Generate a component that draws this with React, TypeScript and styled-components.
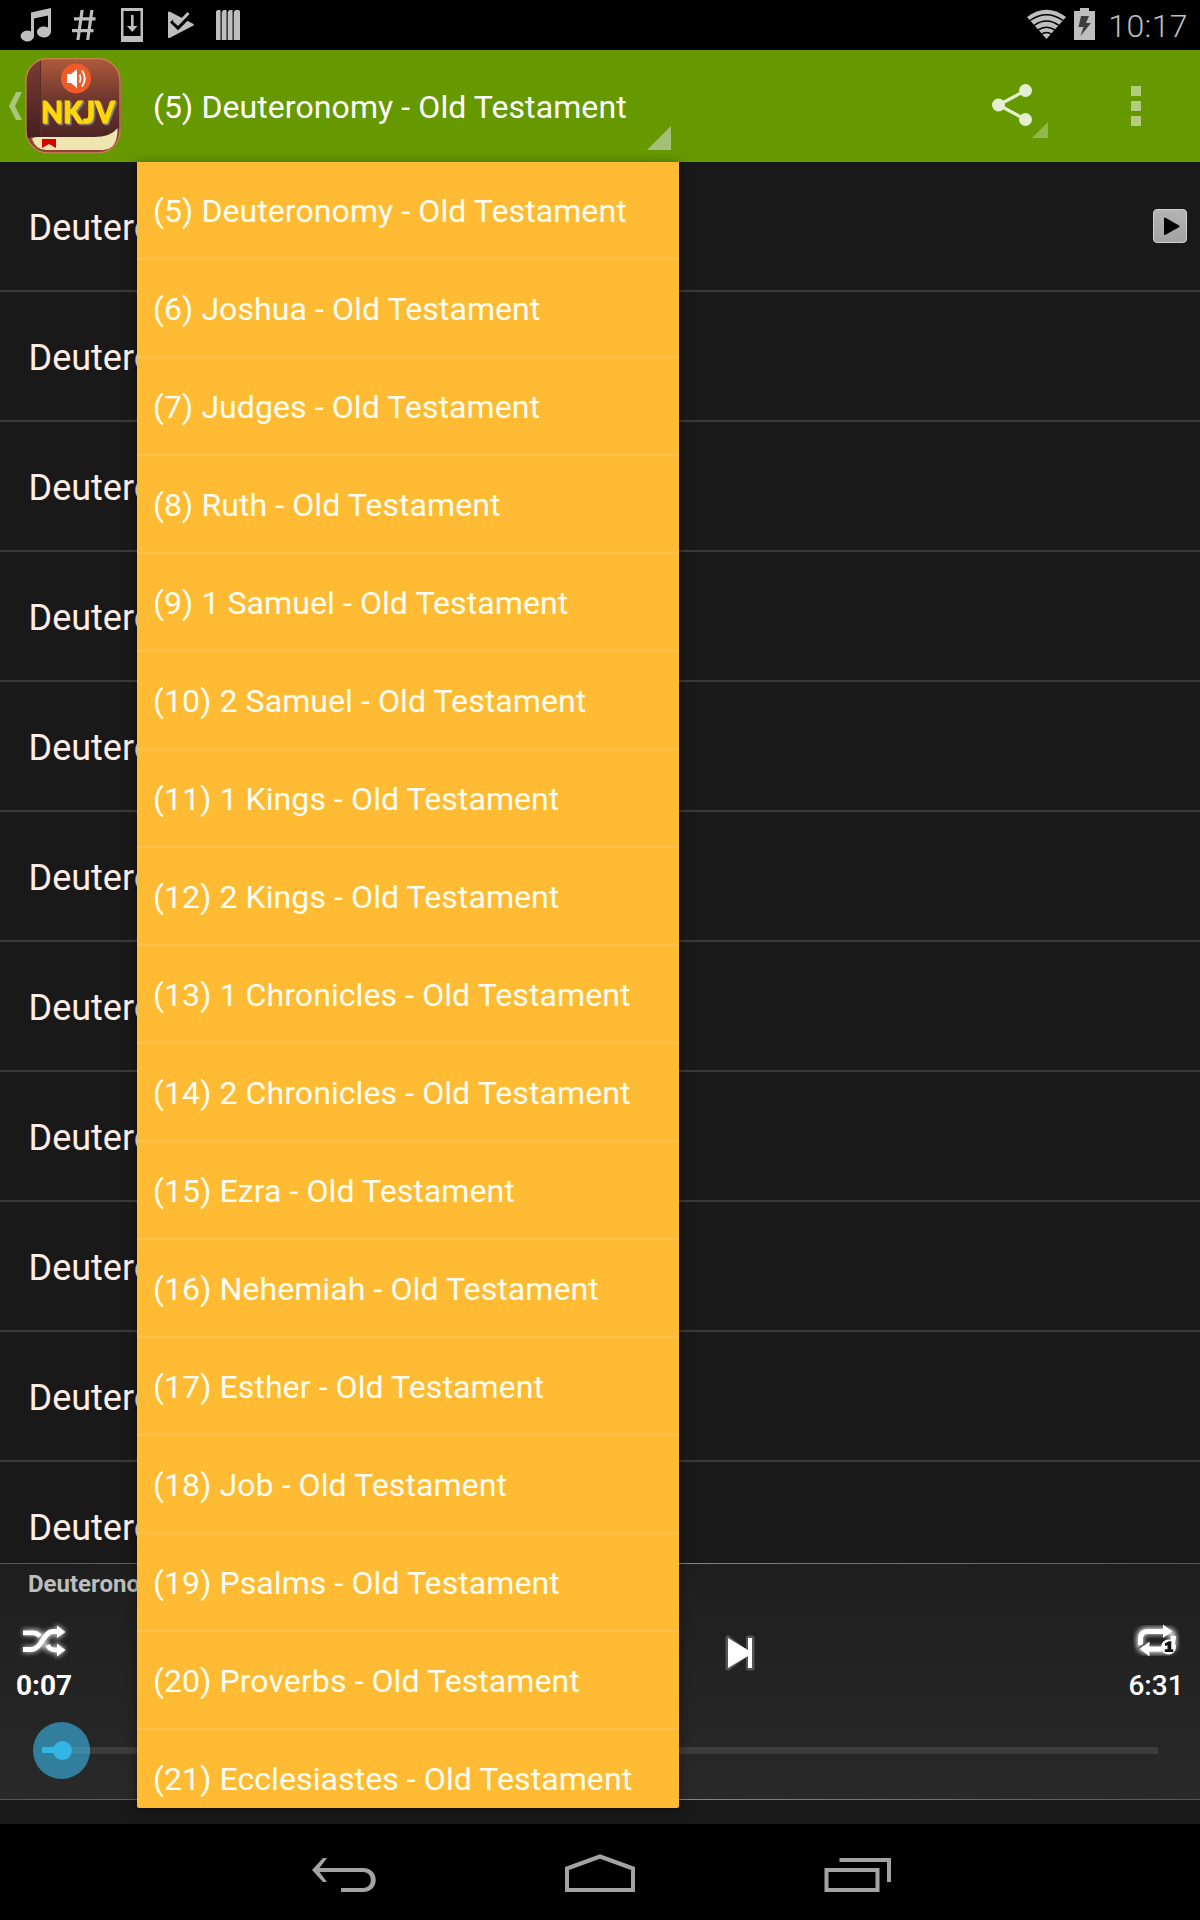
import React from "react";
import styled, { createGlobalStyle } from "styled-components";

const Global = createGlobalStyle`
  * { box-sizing: border-box; }
  body { margin: 0; background: #000; font-family: Roboto, "Noto Sans", sans-serif; }
  svg { display: block; flex: none; }
`;

const Screen = styled.div`
  position: relative;
  width: 1200px;
  height: 1920px;
  display: flex;
  flex-direction: column;
  overflow: hidden;
  background: #191919;
`;

const StatusBar = styled.header`
  height: 50px;
  flex: none;
  display: flex;
  justify-content: space-between;
  padding: 0 12px 0 20px;
  background: #000;
`;

const StatusGroup = styled.div<{ $gap: number }>`
  display: flex;
  align-items: center;
  gap: ${(p) => p.$gap}px;
`;

const Clock = styled.span`
  font-size: 32px;
  line-height: 50px;
  font-weight: 300;
  letter-spacing: 0.4px;
  color: #bebebe;
  padding-top: 2px;
  margin-left: 5px;
`;

const ActionBar = styled.div`
  height: 112px;
  flex: none;
  display: flex;
  background: #669900;
`;

const UpButton = styled.div`
  width: 137px;
  display: flex;
  padding: 8px 0 0 9px;
`;

const Spinner = styled.div`
  width: 534px;
  height: 100px;
  padding-left: 16px;
  display: flex;
  justify-content: space-between;
`;

const SpinnerText = styled.span`
  font-size: 32px;
  line-height: 114px;
  letter-spacing: 0.09px;
  color: #fff;
  white-space: nowrap;
`;

const Corner = styled.i<{ $size: number; $color: string }>`
  width: ${(p) => p.$size}px;
  height: ${(p) => p.$size}px;
  align-self: flex-end;
  margin-left: auto;
  background: ${(p) => p.$color};
  clip-path: polygon(100% 0, 100% 100%, 0 100%);
`;

const Actions = styled.div`
  flex: 1;
  display: flex;
  justify-content: flex-end;
  padding-right: 59px;
`;

const ShareButton = styled.div`
  height: 88px;
  display: flex;
  padding-top: 34px;
  margin-right: 83px;
`;

const Overflow = styled.div`
  display: flex;
  flex-direction: column;
  gap: 5px;
  padding-top: 36px;
`;

const Dot = styled.i`
  width: 10px;
  height: 10px;
  background: #b2cc80;
`;

const List = styled.main`
  height: 1401px;
  flex: none;
  overflow: hidden;
  background: #191919;
`;

const Chapter = styled.div`
  height: 130px;
  display: flex;
  align-items: center;
  justify-content: space-between;
  padding: 0 13px 0 28px;
  border-bottom: 2px solid #3a3a3a;
  font-size: 36px;
  color: #ffeee8;
`;

const ChapterName = styled.span`
  padding: 4px 0 0 0.5px;
`;

const Player = styled.section`
  height: 237px;
  flex: none;
  display: flex;
  flex-direction: column;
  border-style: solid;
  border-width: 1px 0;
  border-image: linear-gradient(90deg, #555, #8c8c8c 50%, #555) 1;
  background: linear-gradient(#1e1e1e, #292929);
`;

const TrackTitle = styled.div`
  padding: 5px 0 0 28px;
  height: 54px;
  font-size: 24px;
  line-height: 30px;
  font-weight: 700;
  color: #bdbdbd;
`;

const Controls = styled.div`
  height: 94px;
  display: flex;
  justify-content: space-between;
  padding: 0 12px;
`;

const ControlColumn = styled.div`
  width: 64px;
  display: flex;
  flex-direction: column;
  align-items: center;
`;

const SkipSlot = styled.div`
  flex: 1;
  padding: 15px 0 0 649px;
`;

const Time = styled.span<{ $weight: number }>`
  margin-top: 6px;
  font-size: 28px;
  line-height: 36px;
  font-weight: ${(p) => p.$weight};
  color: #fff;
`;

const SeekBar = styled.div`
  display: flex;
  align-items: center;
  height: 57px;
  margin: 10px 42px 0 33px;
`;

const Thumb = styled.div`
  width: 57px;
  height: 57px;
  flex: none;
  display: flex;
  align-items: center;
  border-radius: 50%;
  background: #317f9c;
  padding-left: 9px;
`;

const Progress = styled.i`
  width: 13px;
  height: 6px;
  margin-top: -2px;
  background: #33b5e5;
`;

const Knob = styled.i`
  width: 19px;
  height: 19px;
  margin-left: -2px;
  border-radius: 50%;
  background: #33b5e5;
`;

const Remaining = styled.i<{ $inside?: boolean }>`
  flex: 1;
  height: 7px;
  background: ${(p) => (p.$inside ? "#3f87a2" : "#3c3c3c")};
`;

const Footer = styled.div`
  height: 24px;
  flex: none;
`;

const NavBar = styled.nav`
  height: 96px;
  flex: none;
  display: flex;
  justify-content: center;
  align-items: flex-start;
  gap: 188.5px;
  padding: 30px 0 0 1px;
  background: #000;
`;

const Menu = styled.ul`
  position: absolute;
  left: 137px;
  top: 162px;
  width: 542px;
  height: 1646px;
  margin: 0;
  padding: 0;
  overflow: hidden;
  list-style: none;
  background: #ffbb33;
  border-radius: 0 0 2px 2px;
  box-shadow: 0 2px 12px rgba(0, 0, 0, 0.45);
`;

const MenuItem = styled.li`
  height: 98px;
  padding-left: 16px;
  border-bottom: 2px solid #ffc34c;
  font-size: 32px;
  line-height: 99px;
  letter-spacing: 0.09px;
  color: #fffef4;
  white-space: nowrap;
`;

const books = [
  "(5) Deuteronomy", "(6) Joshua", "(7) Judges", "(8) Ruth", "(9) 1 Samuel",
  "(10) 2 Samuel", "(11) 1 Kings", "(12) 2 Kings", "(13) 1 Chronicles",
  "(14) 2 Chronicles", "(15) Ezra", "(16) Nehemiah", "(17) Esther", "(18) Job",
  "(19) Psalms", "(20) Proverbs", "(21) Ecclesiastes",
];

const StatusIcons = () => (
  <svg width="222" height="50" viewBox="20 0 222 50" fill="#bebebe">
    <path d="M31 12.500 51 8v24a7 5.500 0 1 1-3-4.600V15.500L34 18.500V36a6.700 5.500 0 1 1-3-4.600Z" />
    <path d="M80.500 10h3.200l-4.200 30h-3.200zM90.300 10h3.200l-4.200 30h-3.200zM74 17.300h21.500v3.200H74zM72 29h21.500v3.200H72z" />
    <path fillRule="evenodd" d="M121 8h22v34h-22zM123.500 11v25h17V11zM131 15h2.600v11h3.900L132.300 32l-5.300-6h4z" />
    <path d="M168 12.500q0-1.500 1.500-1L193.500 24q1 .8 0 1.500l-24 12.500q-1.500 .5-1.500-1z" />
    <path d="m171.500 21 6.500 6.500L191.500 14" fill="none" stroke="#000" strokeWidth="4" />
    <path d="m173.500 20 4.500 4 10.500-11" fill="none" stroke="#bebebe" strokeWidth="2.800" />
    <path d="M216 11.500 217.500 10h3v30H216zM222 11.500 223.500 10h3v30H222zM228 11.500 229.500 10h3v30H228zM234 11.500 235.500 10h3.500l1 1.500V40h-6z" />
    <path d="M220.500 12h1v28h-1zM226.500 12h1v28h-1zM232.500 12h1v28h-1z" fill="#777" />
  </svg>
);

const Wifi = () => (
  <svg width="39" height="50" viewBox="0 0 39 50">
    <path d="M0 17Q19.500 2.500 39 17L19.500 39z" fill="#bebebe" />
    <g fill="none" stroke="#000" strokeWidth="1.500">
      <path d="M3 20.500Q19.500 9 36 20.500" />
      <path d="M7 25.500Q19.500 16.500 32 25.500" />
      <path d="M11 30Q19.500 24.500 28 30" />
      <path d="M14 34.500Q19.500 30.500 25 34.500" />
    </g>
  </svg>
);

const Battery = () => (
  <svg width="21" height="50" viewBox="0 0 21 50">
    <path d="M0 11h6V8h9v3h6v29H0z" fill="#bebebe" />
    <path d="M7 16h8l-3 7h5L6.500 36l3-9H4.500z" fill="#3c3c3c" />
  </svg>
);

const AppIcon = () => (
  <svg width="112" height="96" viewBox="9 58 112 96">
    <defs>
      <linearGradient id="cover" x1="0" y1="0" x2="0" y2="1">
        <stop offset="0" stopColor="#b05a3c" />
        <stop offset=".5" stopColor="#70392f" />
        <stop offset="1" stopColor="#4c2423" />
      </linearGradient>
      <linearGradient id="spine" x1="0" y1="0" x2="0" y2="1">
        <stop offset="0" stopColor="#7d3d31" />
        <stop offset="1" stopColor="#3f1f20" />
      </linearGradient>
      <clipPath id="tile"><rect x="26" y="58.500" width="94.500" height="95" rx="22" /></clipPath>
      <filter id="letter-shadow" x="-10%" y="-10%" width="120%" height="130%">
        <feDropShadow dx="1.500" dy="1.500" stdDeviation=".4" floodColor="#8b8a83" />
      </filter>
    </defs>
    <path d="M22 92h-6L9 106l7 14h6l-7-14z" fill="#a9c77a" />
    <g clipPath="url(#tile)">
      <rect x="25" y="58" width="96" height="96" fill="#8f4633" />
      <path d="M25 58h96v68q-6 11-24 11H25z" fill="url(#cover)" />
      <path d="M25 58h16v79H31q-3 1-6 4z" fill="url(#spine)" />
      <path d="M40 59h1v77h-1z" fill="#5a2c29" />
      <path d="M32 139q1-2 6-2h56q17 0 23.500-9 0 16-7.500 20-3 2-10 2H46q-10 0-14-11z" fill="#f0e5b0" />
      <path d="M42 139h14v9l-7-4-7 4z" fill="#d90000" />
    </g>
    <rect x="26" y="58.500" width="94" height="94.500" rx="22" fill="none" stroke="#c5834f" strokeWidth="1.300" />
    <circle cx="76" cy="78.500" r="15" fill="#ee5a28" />
    <path d="M67 74h4l6-5v19l-6-5h-4z" fill="#fff" />
    <g fill="none" stroke="#fff" strokeWidth="1.800">
      <path d="M79.500 74.500q2 4 0 8M82 70.500q5.500 8 0 16" />
    </g>
    <text
      x="41"
      y="122.500"
      textLength="74"
      lengthAdjust="spacingAndGlyphs"
      fontFamily="Lato, sans-serif"
      fontWeight="900"
      fontSize="31"
      fill="#ffd800"
      stroke="#ffd800"
      strokeWidth="1"
      filter="url(#letter-shadow)"
    >
      NKJV
    </text>
  </svg>
);

const Share = () => (
  <svg width="40" height="42" viewBox="0 0 40 42" fill="#e4efd0">
    <path d="M33.500 6.500 6.500 21l27 14.500" fill="none" stroke="#e4efd0" strokeWidth="3.300" />
    <circle cx="33.500" cy="6.500" r="6.500" />
    <circle cx="6.500" cy="21" r="6.500" />
    <circle cx="33.500" cy="35.500" r="6.500" />
  </svg>
);

const PlayBadge = () => (
  <svg width="34" height="34" viewBox="0 0 34 34">
    <defs>
      <linearGradient id="badge" x1="0" y1="0" x2="0" y2="1">
        <stop offset="0" stopColor="#b4b4b4" />
        <stop offset="1" stopColor="#a2a2a2" />
      </linearGradient>
    </defs>
    <rect x=".5" y=".5" width="33" height="33" rx="3.500" fill="url(#badge)" stroke="#d0d0d0" />
    <path d="M12 9.500v15.500l13.500-7.700z" fill="#000" stroke="#000" strokeWidth="2" strokeLinejoin="round" />
  </svg>
);

const Shuffle = () => (
  <svg width="60" height="44" viewBox="14 1618 60 44">
    <defs>
      <filter id="glow" x="-20%" y="-30%" width="140%" height="160%">
        <feGaussianBlur stdDeviation="2.500" />
      </filter>
    </defs>
    <g filter="url(#glow)" opacity=".75">
      <path d="M23 1632.500h13c8 0 6 17 17 17h7M23 1649.500h8c12 0 12-17 22-17h7" fill="none" stroke="#fff" strokeWidth="6" />
      <path d="m56 1624 10 8-10 8zM56 1642l10 8-10 8z" fill="#fff" />
    </g>
    <path d="M23 1632.800h10q4 0 7 3.500M23 1649.500h8c11 0 12-18 22-18h6M47.500 1645q2.500 4.800 7 4.800h5" fill="none" stroke="#fff" strokeWidth="4.800" />
    <path d="m57 1625.500 8.500 6.500-8.500 6zM57 1643.500l8.500 6.500-8.500 6.500z" fill="#fff" />
  </svg>
);

const Repeat = () => (
  <svg width="60" height="44" viewBox="1126 1618 60 44">
    <g filter="url(#glow)" opacity=".85">
      <rect x="1140" y="1631" width="33" height="19" rx="6" fill="none" stroke="#fff" strokeWidth="7" />
    </g>
    <path d="M1140.500 1645v-6q0-7.500 7-7.500h17" fill="none" stroke="#fff" strokeWidth="5" />
    <path d="m1163 1624.500 9.500 7-9.500 6.500zM1149.500 1641.500v15l-9.500-7.500z" fill="#fff" />
    <path d="M1147 1649h18q8-1 8.500-13" fill="none" stroke="#fff" strokeWidth="5" />
    <path d="m1137.500 1649 10-7.500" stroke="#555" strokeWidth="1.500" />
    <circle cx="1168.500" cy="1647" r="7.500" fill="#fff" />
    <path d="M1165 1643.200 1169 1641.300h2.300v8h2v2.700h-8.500v-2.700h2.700v-4l-2.500.8z" fill="#111" />
  </svg>
);

const Skip = () => (
  <svg width="30" height="40" viewBox="725 1633 30 40">
    <g stroke="#555" strokeWidth="5" strokeLinejoin="round" fill="#fff">
      <path d="M728 1638v30l19-14.500z" />
      <path d="M748.500 1638h3.500v30h-3.500z" />
    </g>
    <path d="M728 1638v30l20-12v12h4v-30h-4v12z" fill="#fff" />
  </svg>
);

const NavBack = () => (
  <svg width="66" height="40" viewBox="311 1854 66 40">
    <path d="M323 1858h4l-7.500 10H363c17 0 17 24 0 24h-22v-4h22c10.500 0 10.500-16 0-16h-43.500l7.500 10h-4l-11-12z" fill="#a3a3a3" />
  </svg>
);

const NavHome = () => (
  <svg width="70" height="40" viewBox="565 1854 70 40">
    <path d="M567 1890v-21.500L600 1856.500l33 12V1890z" fill="none" stroke="#a3a3a3" strokeWidth="4" />
  </svg>
);

const NavRecent = () => (
  <svg width="67" height="40" viewBox="824.5 1854 67 40">
    <path d="M827 1870h51v20h-51zM840 1860h49.500v22" fill="none" stroke="#a3a3a3" strokeWidth="4" />
  </svg>
);

export default function App() {
  return (
    <>
      <Global />
      <Screen>
        <StatusBar>
          <StatusGroup $gap={0}><StatusIcons /></StatusGroup>
          <StatusGroup $gap={8}>
            <Wifi />
            <Battery />
            <Clock>10:17</Clock>
          </StatusGroup>
        </StatusBar>
        <ActionBar>
          <UpButton><AppIcon /></UpButton>
          <Spinner>
            <SpinnerText>(5) Deuteronomy - Old Testament</SpinnerText>
            <Corner $size={24} $color="#a3bf78" />
          </Spinner>
          <Actions>
            <ShareButton>
              <Share />
              <Corner $size={16} $color="#94b74d" />
            </ShareButton>
            <Overflow><Dot /><Dot /><Dot /></Overflow>
          </Actions>
        </ActionBar>
        <List>
          {Array.from({ length: 11 }, (_, i) => (
            <Chapter key={i}>
              <ChapterName>Deuteronomy</ChapterName>
              {i === 0 && <PlayBadge />}
            </Chapter>
          ))}
        </List>
        <Player>
          <TrackTitle>Deuteronomy</TrackTitle>
          <Controls>
            <ControlColumn>
              <Shuffle />
              <Time $weight={700}>0:07</Time>
            </ControlColumn>
            <SkipSlot><Skip /></SkipSlot>
            <ControlColumn>
              <Repeat />
              <Time $weight={500}>6:31</Time>
            </ControlColumn>
          </Controls>
          <SeekBar>
            <Thumb>
              <Progress />
              <Knob />
              <Remaining $inside />
            </Thumb>
            <Remaining />
          </SeekBar>
        </Player>
        <Footer />
        <NavBar>
          <NavBack />
          <NavHome />
          <NavRecent />
        </NavBar>
        <Menu>
          {books.map((b) => (
            <MenuItem key={b}>{b} - Old Testament</MenuItem>
          ))}
        </Menu>
      </Screen>
    </>
  );
}
